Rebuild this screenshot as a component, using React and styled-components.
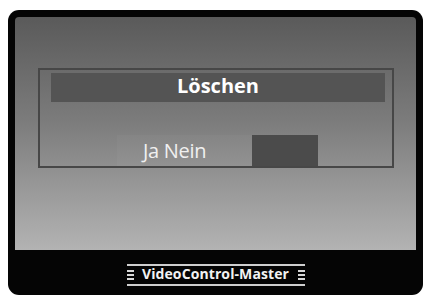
import styled, { createGlobalStyle } from 'styled-components'

const Global = createGlobalStyle`
  html, body {
    margin: 0;
    padding: 0;
    background: #fff;
    overflow: hidden;
  }
  body {
    font-family: 'Open Sans', 'DejaVu Sans', sans-serif;
  }
`

const Frame = styled.div`
  box-sizing: border-box;
  margin: 10px 0 0 8px;
  width: 415px;
  height: 285px;
  background: #050505;
  border-radius: 11px;
  padding: 7px 7px 0 7px;
  display: flex;
  flex-direction: column;
`

const Screen = styled.div`
  height: 233px;
  border-radius: 4px 4px 0 0;
  background: linear-gradient(180deg, #5a5a5a 0%, #7c7c7c 45%, #b3b3b3 100%);
  padding: 51px 22px 0 23px;
  box-sizing: border-box;
`

const Dialog = styled.div`
  box-sizing: border-box;
  height: 100px;
  border: 2px solid #474747;
  display: flex;
  flex-direction: column;
`

const TitleBar = styled.div`
  height: 29px;
  margin: 3px 7px 0 11px;
  background: #545454;
  color: #fff;
  font-weight: 700;
  font-size: 20px;
  line-height: 25px;
  text-align: center;
`

const ChoiceRow = styled.div`
  display: flex;
  margin-top: auto;
  padding-left: 77px;
  height: 31px;
`

const Choice = styled.div`
  width: ${p => p.width}px;
  background: ${p => p.active ? '#4b4b4b' : 'rgba(255, 255, 255, 0.03)'};
  color: #f0f0f0;
  font-size: 20px;
  line-height: 31px;
  padding-left: ${p => p.indent || 0}px;
  box-sizing: border-box;
  letter-spacing: -0.3px;
`

const Footer = styled.div`
  flex: 1;
  display: flex;
  justify-content: center;
  padding-top: 14px;
  box-sizing: border-box;
`

const Label = styled.div`
  height: 22px;
  width: 178px;
  box-sizing: border-box;
  border-top: 2px solid #cfcfcf;
  border-bottom: 2px solid #cfcfcf;
  display: flex;
  justify-content: space-between;
  align-items: flex-start;
`

const Marks = styled.div`
  width: 7px;
  margin-top: 4px;
  display: flex;
  flex-direction: column;
  gap: 2.5px;
  & span {
    display: block;
    height: 1.5px;
    background: #d8d8d8;
  }
`

const LabelText = styled.span`
  color: #f2f2f2;
  font-weight: 700;
  font-size: 14px;
  line-height: 15px;
  letter-spacing: 0.1px;
`

const Dashes = () => (
  <Marks>
    <span />
    <span />
    <span />
  </Marks>
)

export default function App() {
  return (
    <>
      <Global />
      <Frame>
        <Screen>
          <Dialog>
            <TitleBar>Löschen</TitleBar>
            <ChoiceRow>
              <Choice width={135} indent={26}>Ja Nein</Choice>
              <Choice width={66} active />
            </ChoiceRow>
          </Dialog>
        </Screen>
        <Footer>
          <Label>
            <Dashes />
            <LabelText>VideoControl-Master</LabelText>
            <Dashes />
          </Label>
        </Footer>
      </Frame>
    </>
  )
}
